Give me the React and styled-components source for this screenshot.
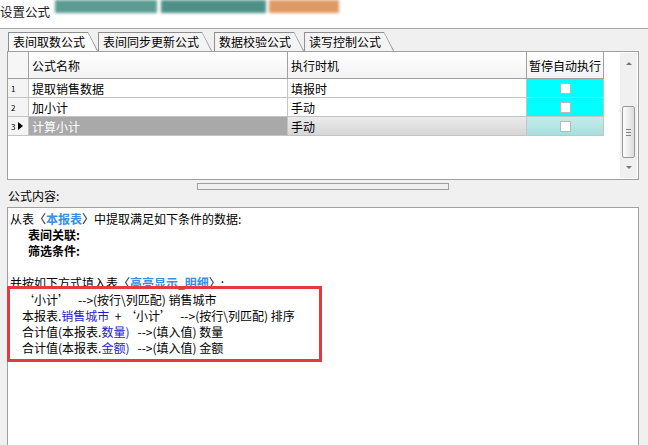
import React from 'react';
import styled, { createGlobalStyle } from 'styled-components';

const GlobalStyle = createGlobalStyle`
	html, body {
		margin: 0;
		padding: 0;
		background: #f0f0f0;
		font-family: "Noto Sans CJK SC", "Microsoft YaHei", sans-serif;
		font-size: 12px;
		color: #000;
		overflow: hidden;
	}
`;

const Window = styled.div`
	width: 648px;
	height: 445px;
	display: flex;
	flex-direction: column;
	overflow: hidden;
`;

const TitleBar = styled.div`
	height: 28px;
	background: #fff;
	border-bottom: 1px solid #a8a8a8;
	display: flex;
	align-items: flex-start;
	flex-shrink: 0;
`;

const TitleText = styled.div`
	width: 55px;
	font-size: 12.5px;
	line-height: 13px;
	padding-top: 5px;
	color: #222;
`;

const Blur = styled.div`
	height: 13px;
	width: ${p => p.w}px;
	margin-left: ${p => p.gap || 0}px;
	background: ${p => p.c};
	filter: blur(1.5px);
	opacity: 0.85;
`;

const Body = styled.div`
	flex: 1;
	display: flex;
	flex-direction: column;
	padding: 0 9px 0 7px;
`;

const TabRow = styled.div`
	display: flex;
	margin-top: 3px;
	height: 19px;
	padding-left: 1px;
`;

const TabOuter = styled.div`
	background: #8e8e8e;
	height: 19px;
	padding: 1px 0 0 1px;
	margin-right: ${p => p.gap}px;
	clip-path: polygon(0 0, calc(100% - 10px) 0, 100% 100%, 0 100%);
	box-sizing: border-box;
`;

const TabInner = styled.div`
	height: 18px;
	box-sizing: border-box;
	padding: 0 13px 0 4px;
	line-height: 18px;
	font-size: 12px;
	white-space: nowrap;
	background: ${p => (p.active ? '#fbfbfb' : '#f4f4f4')};
	clip-path: polygon(0 0, calc(100% - 10px) 0, calc(100% - 1px) 100%, 0 100%);
`;

const GridPanel = styled.div`
	height: 129px;
	border: 1px solid #a0a0a0;
	background: #fff;
	display: flex;
	box-sizing: border-box;
`;

const Table = styled.div`
	flex: 1;
	display: grid;
	grid-template-columns: 21px 259px 239px 77px;
	grid-auto-rows: 19px;
	grid-template-rows: 27px;
	align-content: start;
`;

const Cell = styled.div`
	border-right: 1px solid ${p => (p.header ? '#a0a0a0' : '#c4c4c4')};
	border-bottom: 1px solid ${p => (p.header ? '#a0a0a0' : '#c4c4c4')};
	display: flex;
	align-items: center;
	padding-left: ${p => (p.center ? 0 : 3)}px;
	justify-content: ${p => (p.center ? 'center' : 'flex-start')};
	background: ${p => p.bg || 'transparent'};
	color: ${p => p.fg || '#000'};
	font-size: 12px;
	white-space: nowrap;
	overflow: hidden;
`;

const RowNum = styled.div`
	border-right: 1px solid #c4c4c4;
	border-bottom: 1px solid #c4c4c4;
	background: #f4f4f4;
	display: flex;
	align-items: center;
	padding-left: 3px;
	font-size: 8px;
	gap: 2px;
`;

const Pointer = styled.span`
	width: 0;
	height: 0;
	border-top: 4px solid transparent;
	border-bottom: 4px solid transparent;
	border-left: 5px solid #000;
	margin-left: 1px;
`;

const CheckBox = styled.span`
	width: 11px;
	height: 11px;
	box-sizing: border-box;
	background: #fff;
	border: 1px solid #b8b8b8;
`;

const ScrollTrack = styled.div`
	width: 17px;
	margin: 1px 1px 1px 0;
	background: #f0f0f0;
	display: flex;
	flex-direction: column;
	align-items: center;
`;

const Arrow = styled.span`
	width: 0;
	height: 0;
	margin: ${p => (p.down ? '0 0 9px' : '9px 0 0')};
	border-left: 3px solid transparent;
	border-right: 3px solid transparent;
	${p => (p.down ? 'border-top: 3px solid #777;' : 'border-bottom: 3px solid #777;')}
`;

const Thumb = styled.div`
	width: 13px;
	height: 52px;
	margin-top: 41px;
	box-sizing: border-box;
	border: 1px solid #9a9a9a;
	border-radius: 2px;
	background: linear-gradient(to right, #fdfdfd, #dcdcdc);
	display: flex;
	align-items: center;
	justify-content: center;
	flex-direction: column;
	gap: 2px;
	margin-bottom: auto;
`;

const Grip = styled.span`
	width: 5px;
	height: 1px;
	background: #808080;
`;

const Splitter = styled.div`
	height: 11px;
	display: flex;
	align-items: flex-start;
	padding-left: 190px;
`;

const Handle = styled.div`
	width: 250px;
	height: 5px;
	border: 1px solid #a0a0a0;
	background: #f0f0f0;
	margin-top: 3px;
`;

const Label = styled.div`
	height: 16px;
	line-height: 10px;
	font-size: 12px;
	padding-left: 1px;
`;

const ContentBox = styled.div`
	flex: 1;
	background: #fff;
	border: 1px solid #a0a0a0;
	border-bottom: none;
	padding: 3px 0 0 2px;
	font-size: 12px;
	line-height: 16px;
	white-space: pre;
`;

const Line = styled.div`
	height: 16px;
	line-height: 16px;
	padding-left: ${p => p.indent || 0}px;
	font-weight: ${p => (p.bold ? 700 : 400)};
`;

const Ref = styled.span`
	color: #3a8ee6;
	font-weight: 700;
`;

const Field = styled.span`
	color: #1a1acc;
`;

const Marked = styled.div`
	margin-left: 3px;
	width: 303px;
	padding-left: 9px;
	box-sizing: border-box;
	outline: 3px solid #e23a3f;
	outline-offset: 3px;
	margin-top: 1px;
`;

const rows = [
	{ n: '1', name: '提取销售数据', when: '填报时' },
	{ n: '2', name: '加小计', when: '手动' },
	{ n: '3', name: '计算小计', when: '手动', selected: true },
];

const tabs = [
	{ label: '表间取数公式', active: true, gap: 0 },
	{ label: '表间同步更新公式', gap: 2 },
	{ label: '数据校验公式', gap: 0 },
	{ label: '读写控制公式', gap: 0 },
];

export default function App() {
	return (
		<>
			<GlobalStyle />
			<Window>
				<TitleBar>
					<TitleText>设置公式</TitleText>
					<Blur w={102} c="#3f8b80" />
					<Blur w={105} c="#2f7d72" gap={4} />
					<Blur w={70} c="#d9884a" gap={3} />
				</TitleBar>
				<Body>
					<TabRow>
						{tabs.map(t => (
							<TabOuter key={t.label} gap={t.gap}>
								<TabInner active={t.active}>{t.label}</TabInner>
							</TabOuter>
						))}
					</TabRow>
					<GridPanel>
						<Table>
							<Cell header bg="#f6f6f6" />
							<Cell header bg="linear-gradient(#ffffff, #f3f3f3)">公式名称</Cell>
							<Cell header bg="linear-gradient(#ffffff, #f3f3f3)">执行时机</Cell>
							<Cell header center bg="linear-gradient(#ffffff, #f3f3f3)">暂停自动执行</Cell>
							{rows.map(r => (
								<React.Fragment key={r.n}>
									<RowNum>
										{r.n}
										{r.selected && <Pointer />}
									</RowNum>
									<Cell bg={r.selected ? '#a9a9a9' : '#fff'} fg={r.selected ? '#fff' : '#000'}>
										{r.name}
									</Cell>
									<Cell bg={r.selected ? 'linear-gradient(#ebebeb, #d6d6d6)' : '#fff'}>{r.when}</Cell>
									<Cell center bg={r.selected ? 'linear-gradient(#c4ecec, #a9dede)' : '#00ffff'}>
										<CheckBox />
									</Cell>
								</React.Fragment>
							))}
						</Table>
						<ScrollTrack>
							<Arrow />
							<Thumb>
								<Grip />
								<Grip />
								<Grip />
							</Thumb>
							<Arrow down />
						</ScrollTrack>
					</GridPanel>
					<Splitter>
						<Handle />
					</Splitter>
					<Label>公式内容:</Label>
					<ContentBox>
						<Line>
							从表〈<Ref>本报表</Ref>〉中提取满足如下条件的数据:
						</Line>
						<Line bold indent={18}>表间关联:</Line>
						<Line bold indent={18}>筛选条件:</Line>
						<Line />
						<Line>
							并按如下方式填入表〈<Ref>高亮显示_明细</Ref>〉:
						</Line>
						<Marked>
							<Line>‘小计’   -->(按行\列匹配) 销售城市</Line>
							<Line>
								本报表.<Field>销售城市</Field>  + ‘小计’   -->(按行\列匹配) 排序
							</Line>
							<Line>
								合计值(本报表.<Field>数量)</Field>   -->(填入值) 数量
							</Line>
							<Line>
								合计值(本报表.<Field>金额)</Field>   -->(填入值) 金额
							</Line>
						</Marked>
					</ContentBox>
				</Body>
			</Window>
		</>
	);
}
